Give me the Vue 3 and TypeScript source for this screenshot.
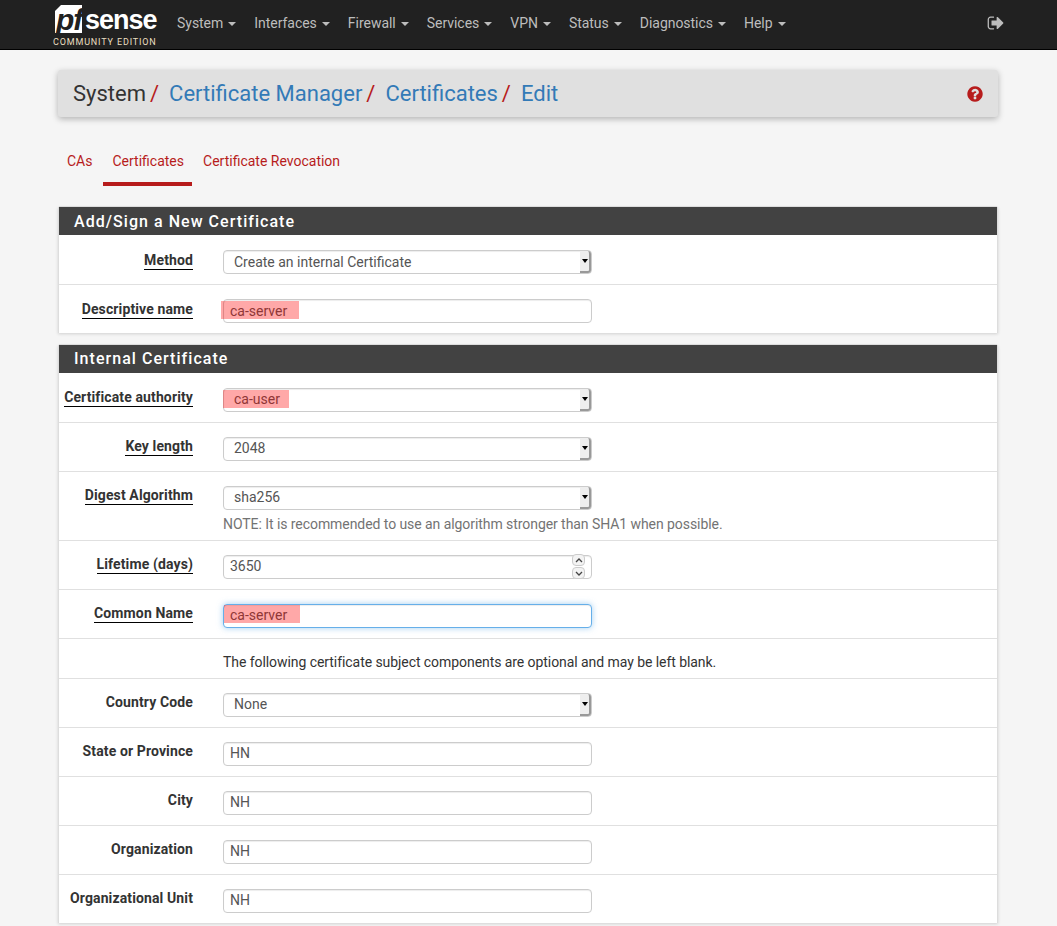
<script setup lang="ts">
interface Row {
  label: string
  kind: 'select' | 'input' | 'number' | 'text'
  value?: string
  strong?: boolean
  note?: string
  focus?: boolean
  mark?: string
}

const menu: string[] = ['System', 'Interfaces', 'Firewall', 'Services', 'VPN', 'Status', 'Diagnostics', 'Help']

const firstPanel: Row[] = [
  { label: 'Method', kind: 'select', value: 'Create an internal Certificate', strong: true },
  { label: 'Descriptive name', kind: 'input', value: 'ca-server', strong: true, mark: 'mark-name' },
]

const secondPanel: Row[] = [
  { label: 'Certificate authority', kind: 'select', value: 'ca-user', strong: true, mark: 'mark-ca' },
  { label: 'Key length', kind: 'select', value: '2048', strong: true },
  {
    label: 'Digest Algorithm',
    kind: 'select',
    value: 'sha256',
    strong: true,
    note: 'NOTE: It is recommended to use an algorithm stronger than SHA1 when possible.',
  },
  { label: 'Lifetime (days)', kind: 'number', value: '3650', strong: true },
  { label: 'Common Name', kind: 'input', value: 'ca-server', strong: true, focus: true, mark: 'mark-common' },
  { label: '', kind: 'text', value: 'The following certificate subject components are optional and may be left blank.' },
  { label: 'Country Code', kind: 'select', value: 'None' },
  { label: 'State or Province', kind: 'input', value: 'HN' },
  { label: 'City', kind: 'input', value: 'NH' },
  { label: 'Organization', kind: 'input', value: 'NH' },
  { label: 'Organizational Unit', kind: 'input', value: 'NH' },
]

const panels = [
  { title: 'Add/Sign a New Certificate', rows: firstPanel },
  { title: 'Internal Certificate', rows: secondPanel },
]
</script>

<template>
  <div class="page">
    <nav class="navbar">
      <div class="brand">
        <div class="logo-top">
          <span class="logo-box"><span class="logo-pf">pf</span></span>
          <span class="logo-sense">sense</span>
        </div>
        <div class="logo-edition">COMMUNITY EDITION</div>
      </div>
      <ul class="menu">
        <li v-for="item in menu" :key="item">{{ item }}<span class="caret"></span></li>
      </ul>
      <svg class="logout" viewBox="0 0 1792 1792" aria-hidden="true">
        <path d="M704 1440q0 4 1 20t.5 26.500-3 23.500-10 19.500-20.500 6.500h-320q-119 0-203.500-84.500t-84.500-203.500v-704q0-119 84.500-203.500t203.500-84.500h320q13 0 22.500 9.500t9.500 22.500q0 4 1 20t.5 26.500-3 23.500-10 19.500-20.500 6.500h-320q-66 0-113 47t-47 113v704q0 66 47 113t113 47h312l11.500 1 11.500 3 8 5.500 7 9 2 13.500zm928-544q0 26-19 45l-544 544q-19 19-45 19t-45-19-19-45v-288h-448q-26 0-45-19t-19-45v-384q0-26 19-45t45-19h448v-288q0-26 19-45t45-19 45 19l544 544q19 19 19 45z" />
      </svg>
    </nav>

    <main class="container">
      <header class="crumbs">
        <span class="crumb-plain">System</span><i class="slash">/</i>
        <a class="crumb">Certificate Manager</a><i class="slash">/</i>
        <a class="crumb">Certificates</a><i class="slash">/</i>
        <a class="crumb">Edit</a>
        <svg class="help" viewBox="0 0 1792 1792" aria-hidden="true">
          <path d="M1024 1376v-192q0-14-9-23t-23-9h-192q-14 0-23 9t-9 23v192q0 14 9 23t23 9h192q14 0 23-9t9-23zm256-672q0-88-55.500-163t-138.500-116-170-41q-243 0-371 213-15 24 8 42l132 100q7 6 19 6 16 0 25-12 53-68 86-92 34-24 86-24 48 0 85.500 26t37.500 59q0 38-20 61t-68 45q-63 28-115.500 86.500t-52.500 125.500v36q0 14 9 23t23 9h192q14 0 23-9t9-23q0-19 21.500-49.500t54.500-49.500q32-18 49-28.500t46-35 44.500-48 28-60.500 12.500-81zm384 192q0 209-103 385.500t-279.500 279.500-385.500 103-385.500-103-279.500-279.500-103-385.500 103-385.500 279.500-279.500 385.500-103 385.500 103 279.500 279.500 103 385.500z" />
        </svg>
      </header>

      <ul class="tabs">
        <li class="tab">CAs</li>
        <li class="tab active">Certificates</li>
        <li class="tab">Certificate Revocation</li>
      </ul>

      <section v-for="panel in panels" :key="panel.title" class="panel">
        <h2 class="panel-title">{{ panel.title }}</h2>
        <div
          v-for="row in panel.rows"
          :key="row.label + row.value"
          class="row"
          :class="{ 'row-text': row.kind === 'text' }"
        >
          <div class="label-cell">
            <span v-if="row.label" class="label" :class="{ strong: row.strong }">{{ row.label }}</span>
          </div>
          <div class="field">
            <p v-if="row.kind === 'text'" class="plain">{{ row.value }}</p>
            <div v-else-if="row.kind === 'select'" class="control select">
              <span>{{ row.value }}</span>
              <span class="select-btn"><span class="select-arrow"></span></span>
            </div>
            <div v-else class="control input" :class="{ focused: row.focus }">
              <span>{{ row.value }}</span>
              <span v-if="row.kind === 'number'" class="spin">
                <span class="spin-btn">
                  <svg viewBox="0 0 8 5"><path d="M1 4l3-3 3 3" /></svg>
                </span>
                <span class="spin-btn">
                  <svg viewBox="0 0 8 5"><path d="M1 1l3 3 3-3" /></svg>
                </span>
              </span>
            </div>
            <p v-if="row.note" class="note">{{ row.note }}</p>
            <span v-if="row.mark" class="mark" :class="row.mark"></span>
          </div>
        </div>
      </section>
    </main>
  </div>
</template>

<style>
html,
body {
  margin: 0;
  background: #f5f5f5;
  overflow: hidden;
}
</style>

<style scoped>
.page {
  height: 926px;
  overflow: hidden;
  background: #f5f5f5;
  font-family: Roboto, sans-serif;
  font-size: 14px;
  color: #333;
}

.navbar {
  height: 49px;
  display: flex;
  align-items: flex-start;
  background: #212121;
  border-bottom: 1px solid #000;
  padding-left: 53px;
  position: relative;
}

.brand {
  width: 124px;
  height: 49px;
  flex: none;
  padding-top: 5px;
  box-sizing: border-box;
}

.logo-top {
  display: flex;
  align-items: flex-start;
  margin-left: 2px;
  height: 29px;
}

.logo-box {
  width: 27px;
  height: 28px;
  position: relative;
  display: block;
  flex: none;
}

.logo-box::before {
  content: "";
  position: absolute;
  inset: 0;
  background: #fff;
  clip-path: polygon(6px 0, 100% 0, 100% 100%, 0 100%, 0 6px);
}

.logo-pf {
  position: relative;
  display: block;
  font: italic 700 30px/29px "Liberation Sans", sans-serif;
  color: #212121;
  letter-spacing: -1px;
  padding-left: 1px;
  height: 28px;
  white-space: nowrap;
}

.logo-sense {
  font: 700 27px/24px "Liberation Sans", sans-serif;
  color: #fff;
  margin: 3px 0 0 3px;
  letter-spacing: -1px;
}

.logo-edition {
  font: 400 9px/10px Roboto, sans-serif;
  letter-spacing: 0.85px;
  color: #e9dfc0;
  margin-top: 3px;
  white-space: nowrap;
}

.menu {
  list-style: none;
  margin: 0;
  padding: 0;
  display: flex;
  gap: 18px;
  line-height: 46px;
  color: #bdbdbd;
  letter-spacing: -0.03px;
}

.caret {
  display: inline-block;
  width: 0;
  height: 0;
  margin-left: 5px;
  vertical-align: middle;
  border-top: 4px solid #bdbdbd;
  border-left: 4px solid transparent;
  border-right: 4px solid transparent;
}

.logout {
  position: absolute;
  left: 987px;
  top: 14px;
  width: 18px;
  height: 18px;
  fill: #bdbdbd;
}

.container {
  width: 940px;
  margin-left: 58px;
}

.crumbs {
  margin-top: 20px;
  height: 47px;
  display: flex;
  align-items: center;
  padding-left: 15px;
  background: #e0e0e0;
  border-radius: 3px;
  box-shadow: 0 2px 6px rgba(0, 0, 0, 0.28);
  font-size: 22px;
  font-weight: 400;
  white-space: pre;
}

.crumb-plain {
  color: #333;
}

.crumb {
  color: #337ab7;
}

.slash {
  color: #b71c1c;
  font-style: normal;
  margin: 0 10px 0 4px;
}

.help {
  width: 18px;
  height: 18px;
  fill: #b71c1c;
  margin-left: auto;
  margin-right: 14px;
}

.tabs {
  list-style: none;
  margin: 23px 0 21px;
  padding: 0;
  display: flex;
  height: 46px;
}

.tab {
  color: #b71c1c;
  padding: 13px 9px 0;
  height: 46px;
  box-sizing: border-box;
  line-height: 17px;
  margin-right: 2px;
  white-space: nowrap;
}

.tab.active {
  border-bottom: 4px solid #b71c1c;
  padding-right: 8px;
}

.panel {
  background: #fff;
  border-left: 1px solid #ddd;
  border-right: 1px solid #ddd;
  box-shadow: 0 1px 3px rgba(0, 0, 0, 0.15);
  margin-bottom: 12px;
}

.panel-title {
  margin: 0 0 1px;
  height: 28px;
  line-height: 30px;
  padding-left: 15px;
  background: #424242;
  color: #fff;
  font-size: 16px;
  font-weight: 500;
  letter-spacing: 1.04px;
  box-shadow: 0 -1px 0 #ddd;
}

.panel + .panel .panel-title {
  line-height: 28px;
}

.row {
  display: grid;
  grid-template-columns: 134px 369px;
  column-gap: 30px;
  padding: 14px 0 10px;
  border-bottom: 1px solid #e0e0e0;
}

.row:last-child {
  border-bottom: none;
}

.row-text {
  padding: 15px 0 0;
  height: 24px;
}

.label-cell {
  text-align: right;
}

.label {
  display: inline-block;
  font-weight: 700;
  line-height: 19px;
  margin-top: 1px;
  color: #333;
  white-space: nowrap;
  letter-spacing: 0.12px;
}

.label.strong {
  line-height: 18px;
  border-bottom: 1px solid #000;
}

.panel + .panel .label {
  margin-top: 0;
}

.field {
  position: relative;
}

.control {
  height: 24px;
  box-sizing: border-box;
  border: 1px solid #ccc;
  border-radius: 4px;
  background: #fff;
  color: #555;
  line-height: 22px;
  box-shadow: inset 0 1px 1px rgba(0, 0, 0, 0.075);
  white-space: nowrap;
  position: relative;
}

.panel + .panel .control {
  line-height: 20px;
}

.input {
  padding-left: 6px;
}

.select {
  padding-left: 10px;
}

.focused {
  border-color: #66afe9;
  box-shadow: inset 0 1px 1px rgba(0, 0, 0, 0.075), 0 0 6px rgba(102, 175, 233, 0.6);
}

.select-btn {
  position: absolute;
  right: 0;
  top: 0;
  bottom: 0;
  width: 11px;
  background: #eee;
  border-right: 2px solid #999;
  border-bottom: 2px solid #999;
  border-radius: 0 3px 3px 0;
  box-sizing: border-box;
  display: flex;
  align-items: center;
  justify-content: center;
}

.select-arrow {
  width: 0;
  height: 0;
  border-top: 4px solid #000;
  border-left: 3px solid transparent;
  border-right: 3px solid transparent;
}

.spin {
  position: absolute;
  right: 6px;
  top: -2px;
  display: flex;
  flex-direction: column;
  gap: 1px;
}

.spin-btn {
  width: 13px;
  height: 12px;
  box-sizing: border-box;
  border: 1px solid #ccc;
  border-radius: 4px;
  background: #f3f3f3;
  display: flex;
  align-items: center;
  justify-content: center;
}

.spin-btn svg {
  width: 8px;
  height: 5px;
  fill: none;
  stroke: #444;
  stroke-width: 1.3;
}

.note {
  margin: 6px 0 -2px;
  font-size: 14px;
  line-height: 16px;
  color: #737373;
  white-space: nowrap;
  letter-spacing: -0.065px;
}

.plain {
  margin: 0;
  line-height: 17px;
  color: #333;
  white-space: nowrap;
  letter-spacing: -0.065px;
}

.mark {
  position: absolute;
  background: rgba(255, 0, 0, 0.34);
  height: 18px;
}

.mark-name {
  left: -2px;
  top: 2px;
  width: 78px;
}

.mark-ca {
  left: 0;
  top: 2px;
  width: 66px;
}

.mark-common {
  left: 1px;
  top: 1px;
  width: 76px;
}
</style>
